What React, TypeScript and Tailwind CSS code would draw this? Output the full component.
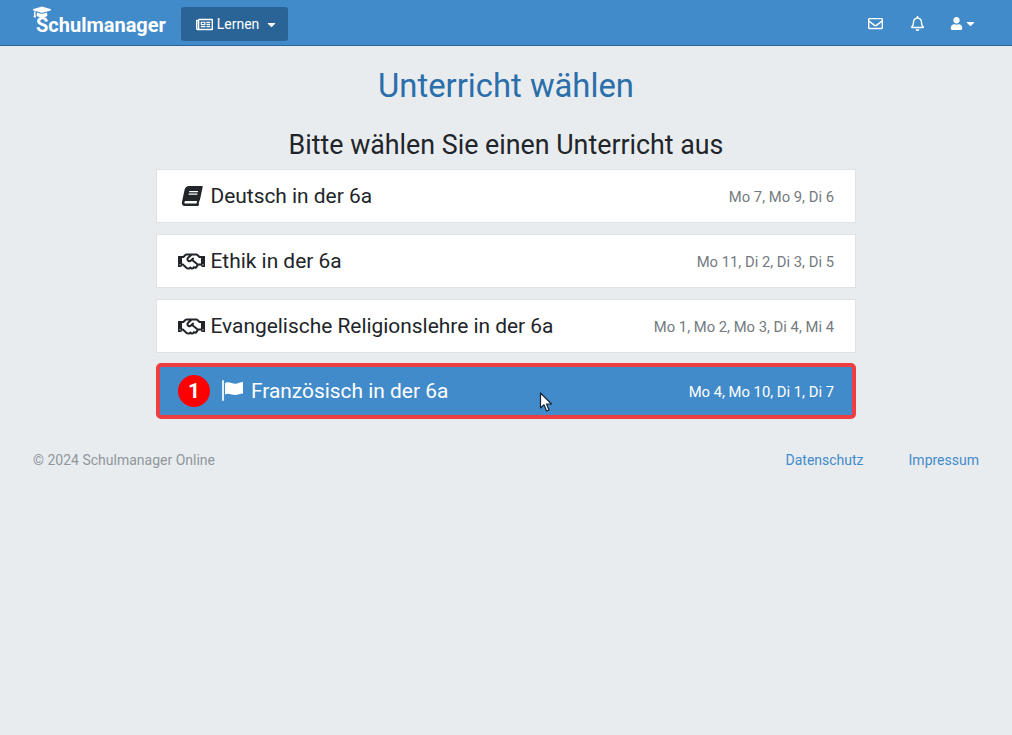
import { FaBook, FaCaretDown, FaGraduationCap, FaRegBell, FaRegEnvelope, FaRegHandshake, FaRegNewspaper, FaUser } from 'react-icons/fa';

const lessons = [
  { id: 'de', name: 'Deutsch in der 6a', times: 'Mo 7, Mo 9, Di 6', icon: 'book' },
  { id: 'et', name: 'Ethik in der 6a', times: 'Mo 11, Di 2, Di 3, Di 5', icon: 'hands' },
  { id: 'ev', name: 'Evangelische Religionslehre in der 6a', times: 'Mo 1, Mo 2, Mo 3, Di 4, Mi 4', icon: 'hands' },
];

function Cursor() {
  return (
    <svg className="absolute left-[379px] top-[25px]" width="14" height="21" viewBox="0 0 14 21">
      <path d="M1.5 1 V16 L5 12.8 L7.6 19 L10 18 L7.5 12 H12.5 Z" fill="#fff" stroke="#1b2433" strokeWidth="1.2" strokeLinejoin="round" />
    </svg>
  );
}

function Flag() {
  return (
    <svg className="ml-[12px] mr-[7px]" width="22" height="22" viewBox="0 0 22 22">
      <rect x="0" y="0" width="2" height="21" rx="1" fill="#dff0fb" />
      <path d="M3 3 C7 0.5 11 5 15 3.5 C17 2.8 19 2 21 2 V13.5 C18 13.5 16 15 13 15 C9.5 15 7 12.5 3 14.5 Z" fill="#fff" />
    </svg>
  );
}

export default function App() {
  return (
    <div className="min-h-[735px] bg-[#e9ecef] font-['Roboto',sans-serif] text-[#212529]">
      {/* Navbar */}
      <nav className="h-[46px] bg-[#428bca] border-b border-[#2a6496] flex items-center pl-[33px] pr-[35px] text-white">
        <div className="relative w-[134px] mr-[14px] pt-[5px] pl-[3px] text-[20px] font-bold leading-none">
          <FaGraduationCap className="absolute left-0 top-[-7px] text-[18px]" />
          Schulmanager
        </div>
        <button className="mt-[2px] pt-[1px] h-[34px] w-[107px] rounded-[3px] bg-[#2a6496] flex items-center justify-center pl-[5px] text-[14px]">
          <FaRegNewspaper className="text-[17px] mr-[4px]" />
          Lernen
          <FaCaretDown className="text-[13px] ml-[6px]" />
        </button>
        <div className="ml-auto mt-[2px] flex items-center">
          <FaRegEnvelope className="text-[15px]" />
          <FaRegBell className="text-[15px] ml-[27px]" />
          <FaUser className="text-[13px] ml-[25px]" />
          <FaCaretDown className="text-[13px] ml-[1px]" />
        </div>
      </nav>

      <main className="flex flex-col items-center">
        <h1 className="mt-[20px] text-[32.8px] leading-[40px] text-[#2a6eaa]">Unterricht wählen</h1>
        <h2 className="mt-[24px] text-[26.8px] leading-[31px] text-[#212529]">Bitte wählen Sie einen Unterricht aus</h2>

        <div className="mt-[8px] w-[700px] flex flex-col gap-[11px]">
          {lessons.map((l) => (
            <div key={l.id} className="h-[54px] bg-white border border-[#dfe3e7] flex items-center pl-[21px] pr-[21px]">
              <span className="w-[32.5px] flex">
                {l.icon === 'book' ? (
                  <FaBook className="text-[20px] ml-[4px] -skew-x-12" />
                ) : (
                  <FaRegHandshake className="text-[27px]" />
                )}
              </span>
              <span className="text-[20.9px] leading-6">{l.name}</span>
              <span className="ml-auto pt-[2px] text-[14.8px] text-[#757a7f]">{l.times}</span>
            </div>
          ))}

          <div className="relative -mt-[1px] h-[56px] bg-[#428bca] border-4 border-[#ef3e42] rounded-[5px] flex items-center pl-[18px] pr-[18px] text-white">
            <span className="w-[32px] h-[32px] rounded-full bg-[#ff0000] flex items-center justify-center text-[21px] font-bold leading-none">1</span>
            <Flag />
            <span className="text-[20.9px] leading-6">Französisch in der 6a</span>
            <span className="ml-auto pt-[2px] text-[14.8px]">Mo 4, Mo 10, Di 1, Di 7</span>
            <Cursor />
          </div>
        </div>

        <footer className="mt-[31px] w-full pl-[33px] pr-[33px] flex items-center text-[14px] leading-5">
          <span className="text-[#8f969c]">© 2024 Schulmanager Online</span>
          <a className="ml-auto text-[#428bca]">Datenschutz</a>
          <a className="ml-[45px] text-[#428bca]">Impressum</a>
        </footer>
      </main>
    </div>
  );
}
